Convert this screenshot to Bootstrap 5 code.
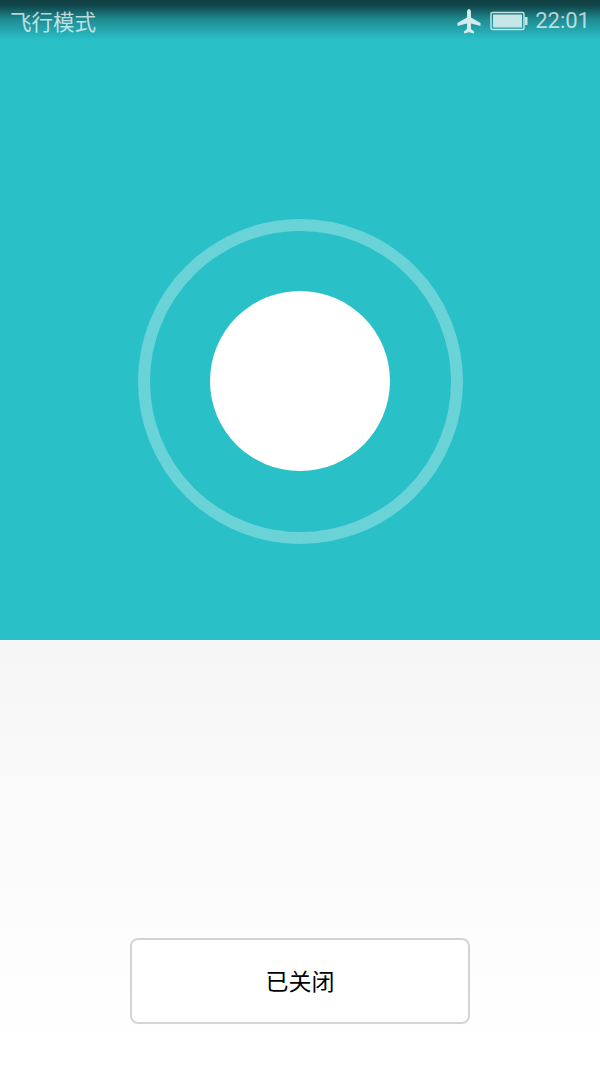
<!DOCTYPE html>
<html lang="zh">
<head>
<meta charset="utf-8">
<title>飞行模式</title>
<link href="https://cdn.jsdelivr.net/npm/bootstrap@5.3.0/dist/css/bootstrap.min.css" rel="stylesheet">
<style>
html,body{margin:0;height:1067px;overflow:hidden;background:#fff;}
.screen{height:1067px;width:600px;font-family:"Roboto","Noto Sans CJK SC",sans-serif;}
.hero{height:640px;background:#29c0c7;position:relative;}
.shade{position:absolute;left:0;right:0;top:0;height:40px;background:linear-gradient(to bottom,rgba(16,62,66,1) 0%,rgba(16,66,70,.95) 15%,rgba(25,110,116,.62) 50%,rgba(41,192,199,0) 100%);}
.sbar{position:relative;height:42px;padding:0 10px 0 10px;}
.sbar-title{font-size:21.500px;line-height:42px;font-family:"Noto Sans CJK SC",sans-serif;color:rgba(255,255,255,.72);}
.sbar-time{font-size:22px;line-height:42px;font-weight:400;color:rgba(255,255,255,.7);}
.stage{height:598px;padding-top:80px;}
.ring{width:325px;height:325px;border:12px solid rgba(255,255,255,.3);border-radius:50%;}
.knob{width:180px;height:180px;background:#fff;border-radius:50%;}
.lower{height:427px;background:linear-gradient(to bottom,#f6f6f6 0%,#fdfdfd 70%,#fff 100%);padding-top:298px;}
.state-btn{width:340px;height:86px;padding:0 0 2px;background:#fff;border:2px solid #d4d4d4;border-radius:8px;font-size:23px;color:#000;font-family:"Noto Sans CJK SC",sans-serif;}
.gap-icon{margin-right:9px;}
.gap-batt{margin-right:7px;}
</style>
</head>
<body>
<div class="screen d-flex flex-column">
  <div class="hero">
    <div class="shade"></div>
    <div class="sbar d-flex align-items-center justify-content-between">
      <span class="sbar-title">飞行模式</span>
      <div class="d-flex align-items-center">
        <svg width="24" height="25" viewBox="0 0 24 25" class="gap-icon"><path fill="#d3eaeb" d="M10 3c0-1.500.9-3 2-3s2 1.500 2 3V8.500L23.500 14V17L14 14.500V20L17 22.500V24.500L12 23.200 7 24.500V22.500L10 20V14.500L.5 17V14L10 8.500Z"/></svg>
        <svg width="38" height="20" viewBox="0 0 38 20" class="gap-batt"><rect x="1" y="1.500" width="33" height="17" rx="1.500" fill="none" stroke="#c4e4e6" stroke-width="1.500"/><rect x="3" y="3.500" width="29" height="13" fill="#c5e5e7"/><rect x="35" y="6" width="2.500" height="8" fill="#c4e4e6"/></svg>
        <span class="sbar-time">22:01</span>
      </div>
    </div>
    <div class="stage d-flex align-items-center justify-content-center">
      <div class="ring d-flex align-items-center justify-content-center"><div class="knob"></div></div>
    </div>
  </div>
  <div class="lower d-flex justify-content-center align-items-start">
    <button type="button" class="btn state-btn">已关闭</button>
  </div>
</div>
<script src="https://cdn.jsdelivr.net/npm/bootstrap@5.3.0/dist/js/bootstrap.bundle.min.js"></script>
</body>
</html>
